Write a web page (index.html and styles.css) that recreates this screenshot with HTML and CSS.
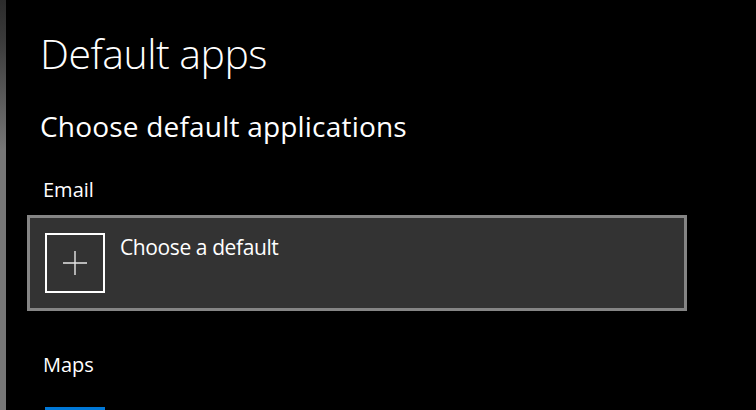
FILE: index.html
```html
<!DOCTYPE html>
<html lang="en">
<head>
<meta charset="utf-8" />
<title>Default apps</title>
<link rel="stylesheet" href="styles.css">
</head>
<body>
	<div class="page">
		<div class="edge"></div>
		<div class="main">
			<h1 class="title">Default apps</h1>
			<h2 class="subTitle">Choose default applications</h2>

			<div class="label">Email</div>
			<div class="pickBox">
				<div class="pickIcon">
					<svg width="26" height="26" viewBox="0 0 26 26">
						<path d="M1 13H25M13 1V25" stroke="#e6e6e6" stroke-width="1.4" fill="none"/>
					</svg>
				</div>
				<div class="pickText">Choose a default</div>
			</div>

			<div class="label labelMaps">Maps</div>
			<div class="appTile"></div>
		</div>
	</div>
</body>
</html>
```

FILE: styles.css
```css
*{ padding:0; margin:0; box-sizing:border-box;}
html,body{ height:100%; overflow:hidden;}
body{ background:#000; color:#fff; font-family:"Open Sans","Noto Sans",sans-serif;}
.page{ display:flex; height:100%; overflow:hidden;}
.edge{ width:6px; flex:none; background:linear-gradient(#2c2c2c 0, #3a3a3a 40px, #777 150px, #777 100%);}
.main{ flex:1; padding-left:21px; overflow:hidden;}

.title{ font-size:41px; font-weight:300; line-height:48px; margin:29px 0 0 13px; letter-spacing:-0.5px;}
.subTitle{ font-size:28px; font-weight:400; line-height:36px; margin:31px 0 0 13px; letter-spacing:0.2px;}
.label{ font-size:20px; line-height:28px; margin:32px 0 0 16px;}
.labelMaps{ margin-top:40px;}

.pickBox{ display:flex; align-items:flex-start; width:660px; height:96px; margin-top:11px; padding:15px; background:#333; border:3px solid #858585;}
.pickIcon{ width:60px; height:60px; flex:none; border:2px solid #fff; display:flex; align-items:center; justify-content:center;}
.pickText{ font-size:21px; line-height:28px; margin-left:15px; letter-spacing:-0.4px;}

.appTile{ width:60px; height:3px; margin:28px 0 0 18px; background:#0078d7;}
```
